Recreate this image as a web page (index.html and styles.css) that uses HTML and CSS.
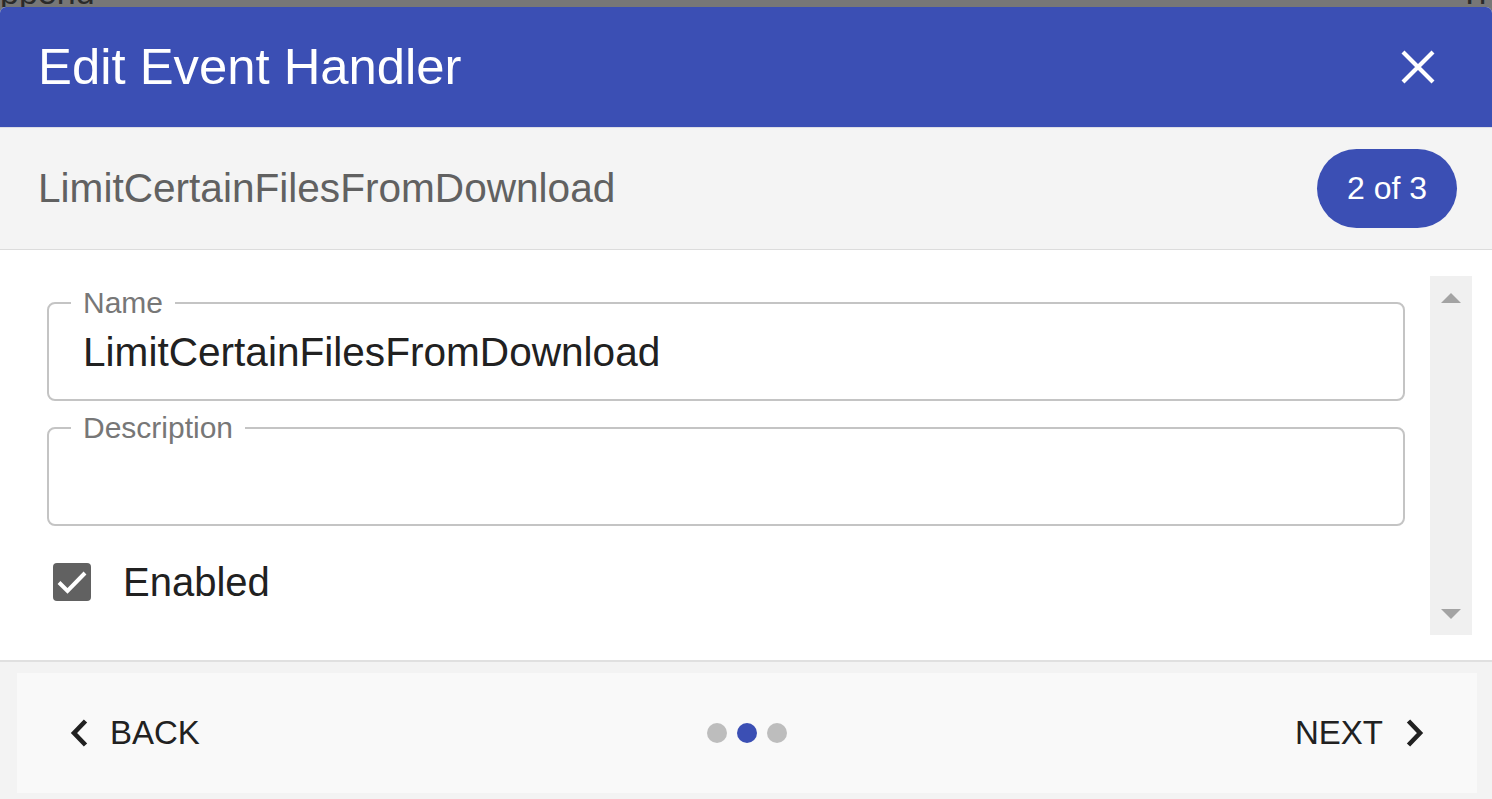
FILE: index.html
```html
<!DOCTYPE html>
<html lang="en">
<head>
<meta charset="utf-8">
<title>Edit Event Handler</title>
<link rel="stylesheet" href="styles.css">
</head>
<body>
<div class="backdrop"><span class="bg-left">ppend</span><span class="bg-right">Tro</span></div>
<div class="dialog">
  <header class="dlg-header">
    <h1 class="dlg-title">Edit Event Handler</h1>
    <button class="close-btn" aria-label="Close">
      <svg width="36" height="36" viewBox="0 0 36 36"><path d="M3 3 L33 33 M33 3 L3 33" stroke="#fff" stroke-width="4.2" fill="none"/></svg>
    </button>
  </header>
  <div class="subheader">
    <span class="handler-name">LimitCertainFilesFromDownload</span>
    <span class="pill">2 of 3</span>
  </div>
  <div class="dlg-body">
    <div class="form">
      <fieldset class="field">
        <legend class="field-label">Name</legend>
        <div class="field-value">LimitCertainFilesFromDownload</div>
      </fieldset>
      <fieldset class="field field-gap">
        <legend class="field-label">Description</legend>
        <div class="field-value"></div>
      </fieldset>
      <label class="check-row">
        <span class="check-box">
          <svg width="38" height="38" viewBox="0 0 38 38"><polyline points="6,19.5 14.5,28 32,10" stroke="#fff" stroke-width="4" fill="none"/></svg>
        </span>
        <span class="check-label">Enabled</span>
      </label>
    </div>
    <div class="scrollbar">
      <span class="arrow arrow-up"></span>
      <span class="arrow arrow-down"></span>
    </div>
  </div>
  <footer class="dlg-footer">
    <div class="nav">
      <div class="nav-btn nav-back">
        <svg width="18" height="30" viewBox="0 0 18 30"><polyline points="15.5,3 4,15 15.5,27" stroke="#212121" stroke-width="4.6" fill="none"/></svg>
        <span>BACK</span>
      </div>
      <div class="dots">
        <span class="dot"></span>
        <span class="dot dot-active"></span>
        <span class="dot"></span>
      </div>
      <div class="nav-btn nav-next">
        <span>NEXT</span>
        <svg width="18" height="30" viewBox="0 0 18 30"><polyline points="2.5,3 14,15 2.5,27" stroke="#212121" stroke-width="4.6" fill="none"/></svg>
      </div>
    </div>
  </footer>
</div>
</body>
</html>
```
FILE: styles.css
```css
* { box-sizing: border-box; }

html, body {
  margin: 0;
  padding: 0;
}

body {
  width: 1492px;
  height: 799px;
  overflow: hidden;
  background: #777777;
  font-family: "Liberation Sans", Arial, sans-serif;
  color: #212121;
}

.backdrop {
  height: 7px;
  overflow: hidden;
  display: flex;
  justify-content: space-between;
  align-items: flex-end;
}

.backdrop span {
  font-size: 34px;
  line-height: 34px;
  color: #2a2a2a;
  flex-shrink: 0;
  margin-bottom: -2px;
}

.bg-right {
  margin-right: -17px;
}

.dialog {
  background: #ffffff;
  border-radius: 6px 6px 0 0;
  overflow: hidden;
  display: flex;
  flex-direction: column;
}

.dlg-header {
  height: 120px;
  background: #3b4fb4;
  display: flex;
  align-items: center;
  justify-content: space-between;
  padding: 0 56px 0 38px;
}

.dlg-title {
  margin: 0;
  font-size: 50.8px;
  font-weight: 400;
  color: #ffffff;
  line-height: 1.15;
}

.close-btn {
  border: 0;
  background: transparent;
  padding: 0;
  display: flex;
  cursor: pointer;
}

.subheader {
  height: 123px;
  background: #f4f4f4;
  border-top: 1px solid #dcdde6;
  border-bottom: 1px solid #dcdcdc;
  display: flex;
  align-items: center;
  justify-content: space-between;
  padding: 0 35px 0 38px;
}

.handler-name {
  font-size: 40.6px;
  color: #616161;
}

.pill {
  height: 79px;
  padding: 0 30px;
  border-radius: 40px;
  background: #3b4fb4;
  color: #ffffff;
  font-size: 32px;
  display: flex;
  align-items: center;
}

.dlg-body {
  height: 410px;
  padding: 26px 20px 25px 47px;
  display: flex;
  gap: 25px;
}

.form {
  flex: 1;
  padding-top: 12px;
  display: flex;
  flex-direction: column;
}

.field {
  margin: 0;
  min-width: 0;
  padding: 10px 34px 23px;
  border: 2px solid #c4c4c4;
  border-radius: 8px;
}

.field-gap {
  margin-top: 12px;
}

.field-label {
  font-size: 30px;
  line-height: 30px;
  color: #777777;
  padding: 0 12px;
  margin-left: -12px;
}

.field-value {
  height: 48px;
  line-height: 48px;
  font-size: 40.6px;
  color: #212121;
  white-space: nowrap;
}

.check-row {
  margin-top: 32px;
  padding-left: 6px;
  height: 48px;
  display: flex;
  align-items: center;
  gap: 32px;
}

.check-box {
  width: 38px;
  height: 38px;
  border-radius: 4px;
  background: #616161;
  display: flex;
}

.check-label {
  font-size: 40px;
  color: #212121;
}

.scrollbar {
  width: 42px;
  background: #f0f0f0;
  display: flex;
  flex-direction: column;
  justify-content: space-between;
  align-items: center;
  padding: 17px 0 16px;
}

.arrow {
  width: 0;
  height: 0;
  border-left: 10px solid transparent;
  border-right: 10px solid transparent;
}

.arrow-up {
  border-bottom: 10px solid #a3a3a3;
}

.arrow-down {
  border-top: 10px solid #a3a3a3;
}

.dlg-footer {
  height: 139px;
  border-top: 2px solid #e0e0e0;
  background: #f3f3f3;
  padding: 11px 15px 6px 17px;
}

.nav {
  height: 120px;
  background: #f9f9f9;
  display: grid;
  grid-template-columns: 1fr auto 1fr;
  align-items: center;
  padding: 0 53px;
}

.nav-btn {
  display: flex;
  align-items: center;
  font-size: 33px;
  color: #212121;
}

.nav-back {
  justify-self: start;
  gap: 22px;
}

.nav-next {
  justify-self: end;
  gap: 23px;
}

.nav-btn svg {
  display: block;
}

.dots {
  display: flex;
  gap: 10px;
}

.dot {
  width: 20px;
  height: 20px;
  border-radius: 50%;
  background: #bdbdbd;
}

.dot-active {
  background: #3b4fb4;
}
```
